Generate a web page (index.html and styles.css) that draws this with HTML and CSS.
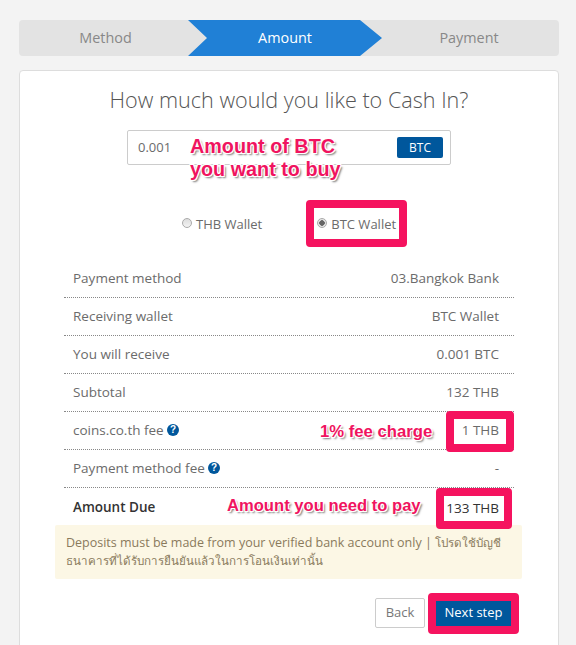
FILE: index.html
```html
<!DOCTYPE html>
<html lang="en">
<head>
  <meta charset="UTF-8">
  <title>Cash In</title>
  <link rel="stylesheet" href="styles.css">
</head>
<body>

<div class="page">
  <!-- Steps -->
  <div class="steps">
    <div class="step step-first">Method</div>
    <div class="step step-active">
      <svg class="step-shape" width="194" height="36" viewBox="0 0 194 36">
        <path d="M0 0 H172 L194 18 L172 36 H0 L19 18 Z" fill="#2080d6"/>
      </svg>
      <span>Amount</span>
    </div>
    <div class="step step-last">Payment</div>
  </div>

  <div class="card">
    <h1>How much would you like to Cash In?</h1>

    <div class="amount-box">
      <span class="amount-value">0.001</span>
      <span class="currency">BTC</span>
      <div class="note note-btc">Amount of BTC<br>you want to buy</div>
    </div>

    <div class="wallets">
      <label class="wallet"><span class="radio"></span>THB Wallet</label>
      <label class="wallet wallet-on mark"><span class="radio radio-on"></span>BTC Wallet</label>
    </div>

    <div class="rows">
      <div class="row"><span>Payment method</span><span>03.Bangkok Bank</span></div>
      <div class="row"><span>Receiving wallet</span><span>BTC Wallet</span></div>
      <div class="row"><span>You will receive</span><span>0.001 BTC</span></div>
      <div class="row"><span>Subtotal</span><span>132 THB</span></div>
      <div class="row">
        <span>coins.co.th fee <svg class="help" viewBox="0 0 12 12"><circle cx="6" cy="6" r="6"/><text x="6" y="9.4" text-anchor="middle">?</text></svg></span>
        <span class="note note-fee">1% fee charge</span>
        <span class="mark mark-fee">1 THB</span>
      </div>
      <div class="row">
        <span>Payment method fee <svg class="help" viewBox="0 0 12 12"><circle cx="6" cy="6" r="6"/><text x="6" y="9.4" text-anchor="middle">?</text></svg></span>
        <span>-</span>
      </div>
      <div class="row row-total">
        <span>Amount Due</span>
        <span class="note note-due">Amount you need to pay</span>
        <span class="mark mark-due">133 THB</span>
      </div>
    </div>

    <div class="notice">Deposits must be made from your verified bank account only | <span class="thai">โปรดใช้บัญชี<br>ธนาคารที่ได้รับการยืนยันแล้วในการโอนเงินเท่านั้น</span></div>

    <div class="actions">
      <button class="btn-back">Back</button>
      <div class="mark mark-next"><button class="btn-next">Next step</button></div>
    </div>
  </div>
</div>

</body>
</html>
```

FILE: styles.css
```css
/* General */
body {
  font-family: "Open Sans", "Noto Sans", sans-serif;
  font-size: 13.5px;
  background: #f3f3f3;
  color: #6b6b6b;
  margin: 0;
  height: 645px;
  overflow: hidden;
}
.page {
  width: 540px;
  margin-left: 19px;
  padding-top: 20px;
}

/* Steps */
.steps {
  display: flex;
  height: 36px;
  background: #e3e3e3;
  border-radius: 4px;
  line-height: 36px;
  font-size: 14.4px;
  text-align: center;
  color: #888;
}
.step {
  flex: 1;
}
.step-first {
  flex: 0 0 173px;
}
.step-last {
  padding-right: 3px;
}
.step-active {
  flex: 0 0 194px;
  position: relative;
  margin-left: -4px;
  color: #fff;
}
.step-shape {
  position: absolute;
  left: 0;
  top: 0;
}
.step-active span {
  position: relative;
}

/* Card */
.card {
  margin-top: 14px;
  height: 600px;
  background: #fff;
  border: 1px solid #ddd;
  border-radius: 4px;
  box-sizing: border-box;
  padding: 0 36px 0 36px;
}
h1 {
  font-size: 21.6px;
  font-weight: 300;
  color: #555;
  text-align: center;
  margin: 14px 0 0;
  line-height: 30px;
}

/* Amount input */
.amount-box {
  position: relative;
  display: flex;
  align-items: center;
  justify-content: space-between;
  box-sizing: border-box;
  width: 324px;
  height: 35px;
  margin: 15px 0 0 71px;
  padding: 0 7px 0 10px;
  border: 1px solid #ccc;
  border-radius: 2px;
}
.amount-value {
  font-size: 13px;
  margin-top: -2px;
}
.currency {
  width: 46px;
  line-height: 21px;
  text-align: center;
  font-size: 12px;
  color: #fff;
  background: #00579c;
  border-radius: 2px;
}

/* Red notes drawn over the screenshot */
.note {
  position: absolute;
  font-family: "Liberation Sans", Arial, sans-serif;
  font-weight: bold;
  color: #f0145f;
  text-shadow: 1px 1px 0 #fff, -1px -1px 0 #fff, 1px -1px 0 #fff, -1px 1px 0 #fff, 2px 2px 2px #777;
  white-space: nowrap;
}
.note-btc {
  left: 62px;
  top: 4px;
  font-size: 19.8px;
  line-height: 23px;
}
.note-fee {
  left: 256px;
  top: 10px;
  font-size: 16.7px;
}
.note-due {
  left: 163px;
  top: 8px;
  font-size: 16.6px;
}
.mark {
  border: 8px solid #f5135f;
  border-radius: 4px;
  background: #fff;
  box-sizing: border-box;
}

/* Wallet choice */
.wallets {
  display: flex;
  align-items: center;
  height: 47px;
  margin: 35px 0 0 126px;
  font-size: 13px;
}
.wallet {
  display: flex;
  align-items: center;
  gap: 4px;
  white-space: nowrap;
}
.wallet-on {
  height: 47px;
  margin-left: 44px;
  padding-left: 3px;
  box-sizing: border-box;
  width: 101px;
}
.radio {
  width: 10px;
  height: 10px;
  margin-top: -2px;
  border: 1px solid #aaa;
  border-radius: 50%;
  background: linear-gradient(#ddd, #f3f3f3);
  box-sizing: border-box;
}
.radio-on {
  background: radial-gradient(circle, #666 0 2.5px, #e6e6e6 3px);
}

/* Summary rows */
.rows {
  margin: 13px 0 0 8px;
  width: 450px;
}
.row {
  position: relative;
  display: flex;
  justify-content: space-between;
  align-items: center;
  box-sizing: border-box;
  height: 38px;
  padding: 0 15px 2px 9px;
  border-bottom: 1px dotted #888;
}
.row-total {
  height: 37px;
  padding-bottom: 0;
  border-bottom: 0;
  color: #333;
}
.row-total span:first-child {
  font-weight: 600;
}
.help {
  width: 12px;
  height: 12px;
  vertical-align: -1px;
}
.help circle {
  fill: #00579c;
}
.help text {
  fill: #fff;
  font-size: 10px;
  font-weight: bold;
  font-family: "Liberation Sans", sans-serif;
}
.mark-fee {
  position: absolute;
  right: 0;
  top: -1px;
  width: 68px;
  height: 41px;
  padding-right: 7px;
  line-height: 23px;
  text-align: right;
}
.mark-due {
  position: absolute;
  right: 2px;
  top: 0;
  width: 76px;
  height: 41px;
  padding-right: 5px;
  line-height: 25px;
  text-align: right;
}

/* Notice */
.notice {
  width: 467px;
  height: 54px;
  box-sizing: border-box;
  margin: 0 0 0 -1px;
  padding: 9px 11px;
  background: #fcf7e5;
  border-radius: 2px;
  font-size: 12.5px;
  line-height: 18px;
  color: #8a7a5c;
}
.thai {
  font-size: 11.6px;
}

/* Buttons */
.actions {
  display: flex;
  justify-content: flex-end;
  align-items: center;
  gap: 3px;
  width: 463px;
  margin-top: 14px;
}
.btn-back {
  width: 50px;
  height: 30px;
  margin-top: -1px;
  padding: 0 0 3px;
  font: 13px "Open Sans", sans-serif;
  color: #777;
  background: #fff;
  border: 1px solid #ccc;
  border-radius: 2px;
}
.mark-next {
  width: 91px;
  height: 41px;
}
.btn-next {
  display: block;
  width: 75px;
  height: 25px;
  font: 13px "Open Sans", sans-serif;
  color: #fff;
  background: #00579c;
  border: 0;
  padding: 0 0 3px;
}
```
